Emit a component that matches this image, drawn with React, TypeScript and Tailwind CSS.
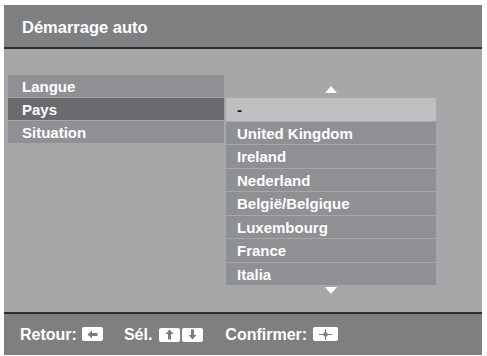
const font = { fontFamily: '"Liberation Sans", Arial, sans-serif' };

const menu = ["Langue", "Pays", "Situation"];
const countries = [
  "-",
  "United Kingdom",
  "Ireland",
  "Nederland",
  "België/Belgique",
  "Luxembourg",
  "France",
  "Italia",
];

function Key({ children, wide }: { children: React.ReactNode; wide?: boolean }) {
  return (
    <span
      className={`inline-flex h-[14px] items-center justify-center rounded-[2px] bg-white ${
        wide ? "w-[25px]" : "w-[21px]"
      }`}
    >
      {children}
    </span>
  );
}

function Arrow({ dir }: { dir: "left" | "up" | "down" }) {
  const rot = dir === "left" ? 0 : dir === "up" ? 90 : -90;
  return (
    <svg width="11" height="11" viewBox="0 0 11 11" style={{ transform: `rotate(${rot}deg)` }}>
      <path d="M0.5 5.5 L5 1.5 L5 4 L10.5 4 L10.5 7 L5 7 L5 9.5 Z" fill="#7c7c7e" />
    </svg>
  );
}

export default function App() {
  return (
    <div className="h-[356px] w-[487px] bg-white px-[4px] pt-[5px]" style={font}>
      <div className="flex h-[350px] w-[478px] flex-col">
        <div className="flex h-[44px] items-center border-b-2 border-[#2f2f30] bg-[#7f8082] pl-[18px] pt-[2px]">
          <span className="text-[16.5px] font-bold text-white">Démarrage auto</span>
        </div>

        <div className="flex flex-1 gap-[2px] bg-[#a6a7a9] pl-[4px] pt-[26px]">
          <div className="flex w-[216px] flex-col gap-px">
            {menu.map((m) => (
              <div
                key={m}
                className={`flex h-[22px] items-center pl-[14px] pt-[2px] text-[15px] font-bold text-white ${
                  m === "Pays" ? "bg-[#6a6b6d]" : "bg-[#8f9093]"
                }`}
              >
                {m}
              </div>
            ))}
          </div>

          <div className="flex w-[210px] flex-col">
            <div className="flex h-[23px] items-center justify-center pt-[6px]">
              <svg width="12" height="7" viewBox="0 0 12 7">
                <path d="M6 0 L12 7 L0 7 Z" fill="#ffffff" />
              </svg>
            </div>
            <div className="flex flex-col gap-px">
              {countries.map((c, i) => (
                <div
                  key={c}
                  className={`flex h-[22.5px] items-center pl-[11px] pt-[2px] text-[15px] font-bold ${
                    i === 0 ? "bg-[#bebfc1] text-[#1a1a1a]" : "bg-[#8f9093] text-white"
                  }`}
                >
                  {c}
                </div>
              ))}
            </div>
            <div className="flex justify-center pt-[2px]">
              <svg width="12" height="7" viewBox="0 0 12 7">
                <path d="M0 0 L12 0 L6 7 Z" fill="#ffffff" />
              </svg>
            </div>
          </div>
        </div>

        <div className="flex h-[43px] items-center border-t-2 border-[#2f2f30] bg-[#7f7f80] pl-[16px] text-[16px] font-bold text-white">
          <span>Retour:</span>
          <span className="ml-[5px]">
            <Key>
              <Arrow dir="left" />
            </Key>
          </span>
          <span className="ml-[21px]">Sél.</span>
          <span className="ml-[7px] flex gap-[2px]">
            <Key>
              <Arrow dir="up" />
            </Key>
            <Key>
              <Arrow dir="down" />
            </Key>
          </span>
          <span className="ml-[22px]">Confirmer:</span>
          <span className="ml-[6px]">
            <Key wide>
              <svg width="13" height="11" viewBox="0 0 13 11">
                <path d="M0 5.5 H13 M6.5 0 V11" stroke="#7c7c7e" strokeWidth="1" />
                <path d="M6.5 2.5 L9.5 5.5 L6.5 8.5 L3.5 5.5 Z" fill="#7c7c7e" />
              </svg>
            </Key>
          </span>
        </div>
      </div>
    </div>
  );
}
